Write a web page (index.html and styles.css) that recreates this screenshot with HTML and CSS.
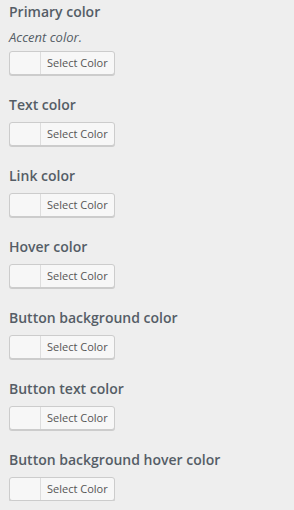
FILE: index.html
```html
<!DOCTYPE html>
<html>
<head>
<meta charset="utf-8">
<link rel="stylesheet" href="styles.css">
</head>
<body>
<ul class="controls">
  <li class="control">
    <span class="title">Primary color</span>
    <span class="desc">Accent color.</span>
    <button class="picker"><span class="swatch"></span><span class="label">Select Color</span></button>
  </li>
  <li class="control">
    <span class="title">Text color</span>
    <button class="picker"><span class="swatch"></span><span class="label">Select Color</span></button>
  </li>
  <li class="control">
    <span class="title">Link color</span>
    <button class="picker"><span class="swatch"></span><span class="label">Select Color</span></button>
  </li>
  <li class="control">
    <span class="title">Hover color</span>
    <button class="picker"><span class="swatch"></span><span class="label">Select Color</span></button>
  </li>
  <li class="control">
    <span class="title">Button background color</span>
    <button class="picker"><span class="swatch"></span><span class="label">Select Color</span></button>
  </li>
  <li class="control">
    <span class="title">Button text color</span>
    <button class="picker"><span class="swatch"></span><span class="label">Select Color</span></button>
  </li>
  <li class="control">
    <span class="title">Button background hover color</span>
    <button class="picker"><span class="swatch"></span><span class="label">Select Color</span></button>
  </li>
</ul>
</body>
</html>
```
FILE: styles.css
```css
html, body {
  margin: 0;
  padding: 0;
  background: #eeeeee;
}
body {
  font-family: "Open Sans", "Noto Sans", sans-serif;
  color: #555d66;
}
.controls {
  list-style: none;
  margin: 0;
  padding: 0 9px;
  display: flex;
  flex-direction: column;
  gap: 18px;
}
.control {
  display: flex;
  flex-direction: column;
  align-items: flex-start;
}
.title {
  font-size: 14px;
  font-weight: 600;
  line-height: 24px;
  color: #555d66;
  margin-bottom: 5px;
}
.desc {
  font-size: 13px;
  font-style: italic;
  line-height: 18px;
  color: #555d66;
  margin-top: -1px;
  margin-bottom: 5px;
}
.picker {
  display: flex;
  align-items: stretch;
  height: 24px;
  padding: 0;
  margin: 0;
  border: 1px solid #cccccc;
  border-radius: 3px;
  background: #f7f7f7;
  box-shadow: 0 1px 0 #cccccc;
  font-family: "Open Sans", "Noto Sans", sans-serif;
  cursor: pointer;
}
.swatch {
  width: 30px;
  border-radius: 2px 0 0 2px;
}
.label {
  border-left: 1px solid #dddddd;
  padding: 0 6px;
  font-size: 11px;
  line-height: 22px;
  color: #555555;
}
```
